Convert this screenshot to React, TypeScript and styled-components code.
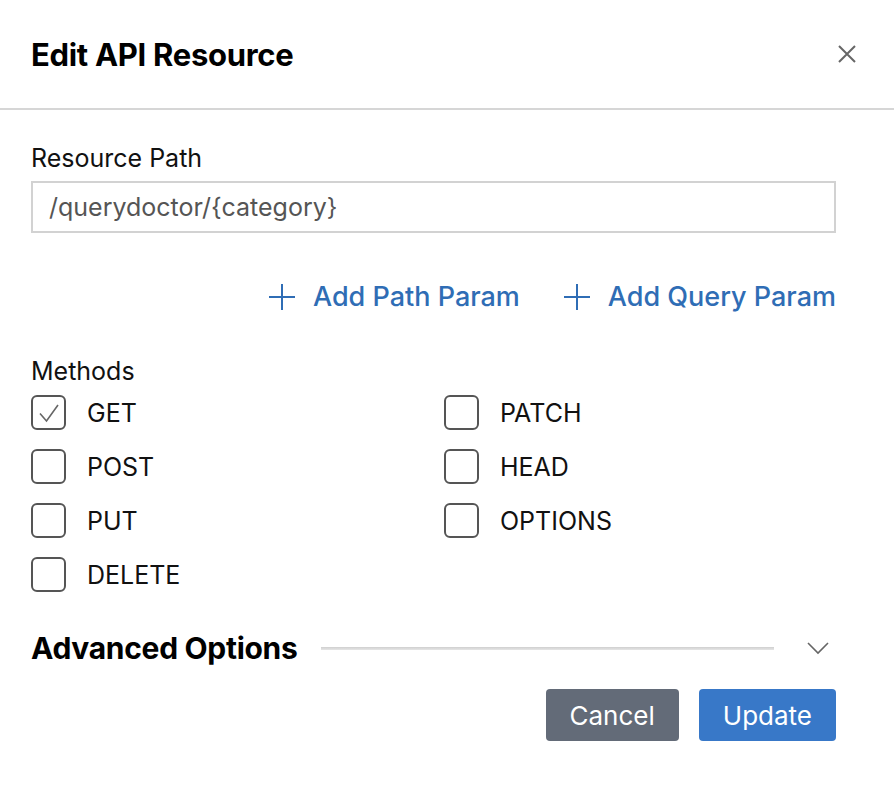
import React from 'react';
import styled, { createGlobalStyle } from 'styled-components';

const GlobalStyle = createGlobalStyle`
  body {
    margin: 0;
    background: #ffffff;
    font-family: Inter, "Noto Sans", "Liberation Sans", sans-serif;
    color: #111111;
  }
`;

const methods = [
  { name: 'GET', checked: true },
  { name: 'PATCH', checked: false },
  { name: 'POST', checked: false },
  { name: 'HEAD', checked: false },
  { name: 'PUT', checked: false },
  { name: 'OPTIONS', checked: false },
  { name: 'DELETE', checked: false },
];

export default function App() {
  return (
    <>
      <GlobalStyle />
      <Modal>
        <Header>
          <Title>Edit API Resource</Title>
          <CloseButton aria-label="Close">
            <svg width="20" height="20" viewBox="0 0 20 20">
              <path d="M2 2 L18 18 M18 2 L2 18" stroke="#666" strokeWidth="2" fill="none" />
            </svg>
          </CloseButton>
        </Header>
        <Body>
          <Label>Resource Path</Label>
          <PathInput defaultValue="/querydoctor/{category}" />
          <ParamRow>
            <ParamLink>
              <PlusIcon />
              Add Path Param
            </ParamLink>
            <ParamLink>
              <PlusIcon />
              Add Query Param
            </ParamLink>
          </ParamRow>
          <MethodsLabel>Methods</MethodsLabel>
          <MethodGrid>
            {methods.map((m) => (
              <MethodItem key={m.name}>
                <CheckBox>
                  {m.checked && (
                    <svg width="24" height="24" viewBox="0 0 24 24">
                      <path d="M3 12.5 L9.5 20 L21 4" stroke="#666" strokeWidth="1.6" fill="none" />
                    </svg>
                  )}
                </CheckBox>
                <MethodName>{m.name}</MethodName>
              </MethodItem>
            ))}
          </MethodGrid>
          <AdvancedRow>
            <AdvancedTitle>Advanced Options</AdvancedTitle>
            <Rule />
            <Chevron>
              <svg width="22" height="14" viewBox="0 0 22 14">
                <path d="M1 2 L11 12 L21 2" stroke="#666" strokeWidth="1.6" fill="none" />
              </svg>
            </Chevron>
          </AdvancedRow>
          <Footer>
            <ActionButton $variant="secondary">Cancel</ActionButton>
            <ActionButton $variant="primary">Update</ActionButton>
          </Footer>
        </Body>
      </Modal>
    </>
  );
}

function PlusIcon() {
  return (
    <svg width="28" height="28" viewBox="0 0 28 28">
      <path d="M14 1 V27 M1 14 H27" stroke="#2f6db5" strokeWidth="2" fill="none" />
    </svg>
  );
}

const Modal = styled.div`
  width: 894px;
  height: 800px;
  background: #fff;
`;

const Header = styled.div`
  display: flex;
  align-items: center;
  justify-content: space-between;
  padding: 0 37px 0 31px;
  border-bottom: 2px solid #d6d6d6;
  box-sizing: border-box;
  height: 110px;
`;

const Title = styled.h2`
  margin: 0;
  font-size: 31px;
  font-weight: 700;
  letter-spacing: -0.3px;
  color: #000;
`;

const CloseButton = styled.button`
  border: none;
  background: none;
  padding: 0;
  display: flex;
  cursor: pointer;
`;

const Body = styled.div`
  padding: 33px 58px 0 31px;
`;

const Label = styled.div`
  font-size: 25px;
  line-height: 30px;
`;

const PathInput = styled.input`
  display: block;
  width: 100%;
  box-sizing: border-box;
  height: 52px;
  margin-top: 8px;
  padding: 0 16px;
  border: 2px solid #d2d2d2;
  font-family: inherit;
  font-size: 25px;
  color: #555;
  outline: none;
`;

const ParamRow = styled.div`
  display: flex;
  justify-content: flex-end;
  gap: 43px;
  margin-top: 48px;
`;

const ParamLink = styled.a`
  display: flex;
  align-items: center;
  gap: 17px;
  font-size: 27px;
  font-weight: 500;
  color: #2f6db5;
  cursor: pointer;
  line-height: 32px;
`;

const MethodsLabel = styled(Label)`
  margin-top: 43px;
`;

const MethodGrid = styled.div`
  display: grid;
  grid-template-columns: 413px 1fr;
  row-gap: 19px;
  margin-top: 9px;
`;

const MethodItem = styled.label`
  display: flex;
  align-items: center;
  gap: 21px;
  cursor: pointer;
`;

const CheckBox = styled.span`
  width: 35px;
  height: 35px;
  box-sizing: border-box;
  border: 2px solid #555;
  border-radius: 6px;
  display: flex;
  align-items: center;
  justify-content: center;
`;

const MethodName = styled.span`
  font-size: 25px;
  color: #111;
`;

const AdvancedRow = styled.div`
  display: flex;
  align-items: center;
  margin-top: 38px;
`;

const AdvancedTitle = styled.div`
  font-size: 30px;
  font-weight: 700;
  letter-spacing: -0.3px;
  color: #000;
  white-space: nowrap;
`;

const Rule = styled.div`
  flex: 1;
  height: 3px;
  margin: 0 33px 0 24px;
  background: linear-gradient(#cfcfcf, #e6e6e6);
`;

const Chevron = styled.div`
  display: flex;
  margin-right: 7px;
`;

const Footer = styled.div`
  display: flex;
  justify-content: flex-end;
  gap: 20px;
  margin-top: 23px;
`;

const ActionButton = styled.button<{ $variant: 'primary' | 'secondary' }>`
  height: 52px;
  padding: 0 24px;
  border: none;
  border-radius: 4px;
  font-family: inherit;
  font-size: 26px;
  color: #fff;
  background: ${(p) => (p.$variant === 'primary' ? '#3878c8' : '#636b78')};
  cursor: pointer;
`;
